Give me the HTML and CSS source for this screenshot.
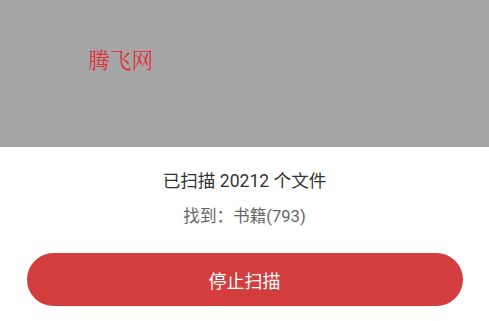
FILE: index.html
```html
<!DOCTYPE html>
<html lang="zh">
<head>
<meta charset="utf-8">
<link rel="stylesheet" href="styles.css">
</head>
<body>
<div class="banner"><span class="logo">腾飞网</span></div>
<div class="panel">
  <div class="scanned">已扫描 20212 个文件</div>
  <div class="found">找到：书籍(793)</div>
  <button class="stop">停止扫描</button>
</div>
</body>
</html>
```
FILE: styles.css
```css
html, body { margin: 0; padding: 0; }
body {
  width: 489px; height: 321px; overflow: hidden; background: #fff;
  font-family: Roboto, "Noto Sans CJK SC", sans-serif;
}
.banner {
  height: 147px; background: #a6a6a6; box-sizing: border-box;
  padding: 45px 0 0 88px;
}
.logo {
  color: #e8232b; font-size: 21.7px; line-height: 28px;
  font-family: "Noto Serif CJK SC", "Noto Sans CJK SC", serif; font-weight: 300;
}
.panel { display: flex; flex-direction: column; align-items: center; }
.scanned { margin-top: 23px; font-size: 17.6px; line-height: 22px; color: #333; }
.found { margin-top: 14px; font-size: 16.6px; line-height: 22px; color: #666; }
.stop {
  margin-top: 25px; width: 436px; height: 53px; border: none; border-radius: 27px;
  background: #d33d3e; color: #fff; font-size: 18px; font-family: inherit; padding: 0;
}
```
